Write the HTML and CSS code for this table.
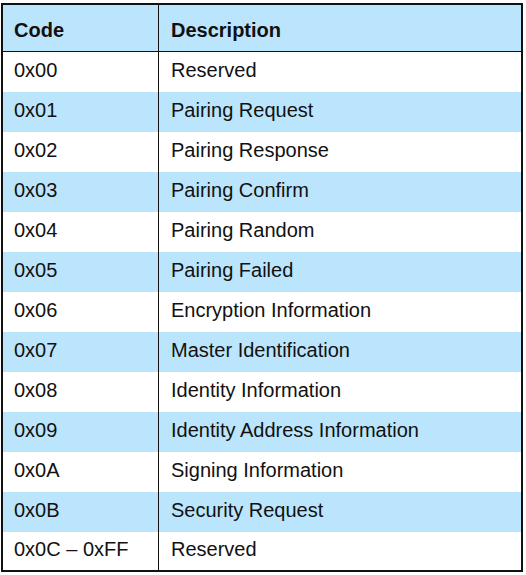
FILE: index.html
```html
<!DOCTYPE html>
<html>
<head>
<meta charset="utf-8">
<link rel="stylesheet" href="styles.css">
</head>
<body>
<table class="codes">
  <thead>
    <tr><th class="c1">Code</th><th class="c2">Description</th></tr>
  </thead>
  <tbody>
    <tr><td class="c1">0x00</td><td class="c2">Reserved</td></tr>
    <tr class="alt"><td class="c1">0x01</td><td class="c2">Pairing Request</td></tr>
    <tr><td class="c1">0x02</td><td class="c2">Pairing Response</td></tr>
    <tr class="alt"><td class="c1">0x03</td><td class="c2">Pairing Confirm</td></tr>
    <tr><td class="c1">0x04</td><td class="c2">Pairing Random</td></tr>
    <tr class="alt"><td class="c1">0x05</td><td class="c2">Pairing Failed</td></tr>
    <tr><td class="c1">0x06</td><td class="c2">Encryption Information</td></tr>
    <tr class="alt"><td class="c1">0x07</td><td class="c2">Master Identification</td></tr>
    <tr><td class="c1">0x08</td><td class="c2">Identity Information</td></tr>
    <tr class="alt"><td class="c1">0x09</td><td class="c2">Identity Address Information</td></tr>
    <tr><td class="c1">0x0A</td><td class="c2">Signing Information</td></tr>
    <tr class="alt"><td class="c1">0x0B</td><td class="c2">Security Request</td></tr>
    <tr class="last"><td class="c1">0x0C – 0xFF</td><td class="c2">Reserved</td></tr>
  </tbody>
</table>
</body>
</html>
```
FILE: styles.css
```css
html, body {
  margin: 0;
  padding: 0;
  background: #ffffff;
}
body {
  font-family: "Liberation Sans", Arial, sans-serif;
  color: #111111;
}
.codes {
  margin: 3px 0 0 1px;
  width: 522px;
  border: 2px solid #111111;
  border-collapse: separate;
  border-spacing: 0;
  table-layout: fixed;
  font-size: 20px;
}
.codes th, .codes td {
  box-sizing: border-box;
  padding: 0 0 0 12px;
  text-align: left;
  vertical-align: middle;
  white-space: nowrap;
}
.codes .c1 {
  width: 156px;
  padding-left: 11px;
  border-right: 1px solid #111111;
}
.codes th {
  height: 47px;
  padding-top: 4px;
  font-weight: bold;
  background: #bbe5fc;
  border-bottom: 1px solid #111111;
}
.codes td {
  height: 40px;
  padding-bottom: 3px;
}
.codes tr.alt td {
  background: #bbe5fc;
}
.codes tr.last td {
  height: 38px;
}
```
